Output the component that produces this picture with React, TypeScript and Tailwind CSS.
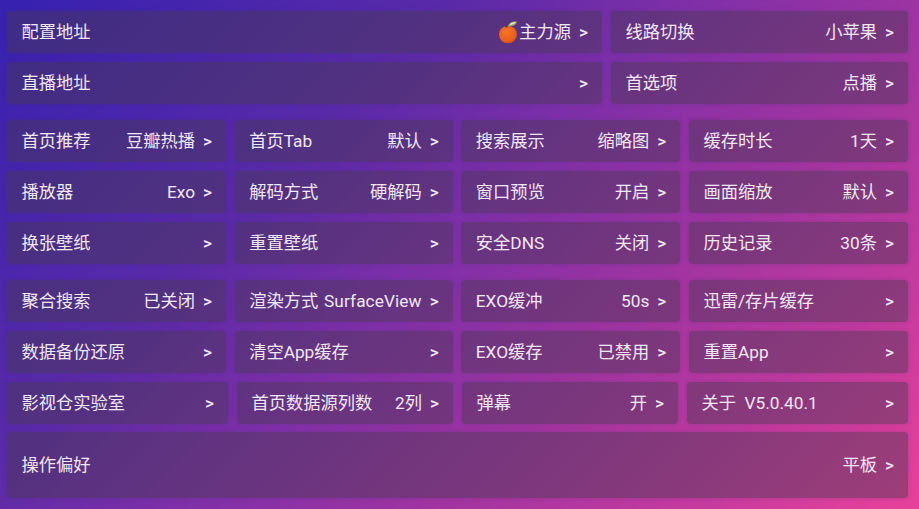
const rows: { gap: string; items: { label: string; value?: string; w: string; apple?: boolean; wide?: boolean }[] }[] = [
  {
    gap: 'mb-[9px]',
    items: [
      { label: '配置地址', value: '主力源', w: 'w-[595px]', apple: true },
      { label: '线路切换', value: '小苹果', w: 'w-[297px]' },
    ],
  },
  {
    gap: 'mb-[16px]',
    items: [
      { label: '直播地址', w: 'w-[595px]' },
      { label: '首选项', value: '点播', w: 'w-[297px]' },
    ],
  },
  {
    gap: 'mb-[9px]',
    items: [
      { label: '首页推荐', value: '豆瓣热播', w: 'w-[219px]' },
      { label: '首页Tab', value: '默认', w: 'w-[218px]' },
      { label: '搜索展示', value: '缩略图', w: 'w-[219px]' },
      { label: '缓存时长', value: '1天', w: 'w-[219px]' },
    ],
  },
  {
    gap: 'mb-[9px]',
    items: [
      { label: '播放器', value: 'Exo', w: 'w-[219px]' },
      { label: '解码方式', value: '硬解码', w: 'w-[218px]' },
      { label: '窗口预览', value: '开启', w: 'w-[219px]' },
      { label: '画面缩放', value: '默认', w: 'w-[219px]' },
    ],
  },
  {
    gap: 'mb-[16px]',
    items: [
      { label: '换张壁纸', w: 'w-[219px]' },
      { label: '重置壁纸', w: 'w-[218px]' },
      { label: '安全DNS', value: '关闭', w: 'w-[219px]' },
      { label: '历史记录', value: '30条', w: 'w-[219px]' },
    ],
  },
  {
    gap: 'mb-[9px]',
    items: [
      { label: '聚合搜索', value: '已关闭', w: 'w-[219px]' },
      { label: '渲染方式', value: 'SurfaceView', w: 'w-[218px]', wide: true },
      { label: 'EXO缓冲', value: '50s', w: 'w-[219px]' },
      { label: '迅雷/存片缓存', w: 'w-[219px]' },
    ],
  },
  {
    gap: 'mb-[9px]',
    items: [
      { label: '数据备份还原', w: 'w-[219px]' },
      { label: '清空App缓存', w: 'w-[218px]' },
      { label: 'EXO缓存', value: '已禁用', w: 'w-[219px]' },
      { label: '重置App', w: 'w-[219px]' },
    ],
  },
  {
    gap: 'mb-[8px]',
    items: [
      { label: '影视仓实验室', w: 'w-[221px]' },
      { label: '首页数据源列数', value: '2列', w: 'w-[216px]' },
      { label: '弹幕', value: '开', w: 'w-[216px]' },
      { label: '关于  V5.0.40.1', w: 'w-[221px]' },
    ],
  },
]

function Apple() {
  return (
    <svg width="21" height="23" viewBox="0 0 21 23" className="mb-[1px] shrink-0">
      <defs>
        <radialGradient id="orange" cx="0.4" cy="0.35" r="0.75">
          <stop offset="0" stopColor="#f5752a" />
          <stop offset="0.7" stopColor="#e85f1c" />
          <stop offset="1" stopColor="#c94a18" />
        </radialGradient>
      </defs>
      <ellipse cx="10" cy="13.500" rx="9" ry="8.800" fill="url(#orange)" />
      <path d="M10 5c1-3 4-5 9-4.500-.5 3-3.500 5.500-9 4.500z" fill="#a9ad62" />
      <path d="M12 3.500c1.500-1 3-1.500 5-1.800" stroke="#e9ecc8" strokeWidth="1.200" fill="none" />
      <path d="M7 5.500c1 .5 2 .5 3 0" stroke="#5c3a1a" strokeWidth="1.200" fill="none" />
    </svg>
  )
}

function Card({ label, value, w, apple, wide, tall }: { label: string; value?: string; w: string; apple?: boolean; wide?: boolean; tall?: boolean }) {
  return (
    <div
      className={`flex ${tall ? 'h-[66px]' : 'h-[42px]'} ${w} items-center justify-between rounded-[4px] bg-[#483a50]/45 pl-[14.5px] pr-[14px] pt-[2px] shadow-[0_0_4px_rgba(70,50,110,0.3)]`}
    >
      <span className="whitespace-pre">{label}</span>
      <span className="flex items-center whitespace-pre">
        {apple && <Apple />}
        {value && <span className={wide ? 'tracking-[0.1px]' : ''}>{value}</span>}
        <span className="ml-[8px] font-medium">&gt;</span>
      </span>
    </div>
  )
}

export default function App() {
  return (
    <div
      className="h-[509px] w-[919px] overflow-hidden bg-[linear-gradient(135deg,#3621b1_0%,#5a2aa8_32%,#8230a8_50%,#a034a1_66%,#c03a9f_82%,#e8419a_100%)] pl-[7px] pr-[11px] pt-[11px] text-[17.25px] leading-none text-[#f1e7f5]"
      style={{ fontFamily: 'Roboto, "Noto Sans CJK SC", sans-serif' }}
    >
      {rows.map((row, i) => (
        <div key={i} className={`flex justify-between ${row.gap}`}>
          {row.items.map((item) => (
            <Card key={item.label} {...item} />
          ))}
        </div>
      ))}
      <Card label="操作偏好" value="平板" w="w-[901px]" tall />
    </div>
  )
}
